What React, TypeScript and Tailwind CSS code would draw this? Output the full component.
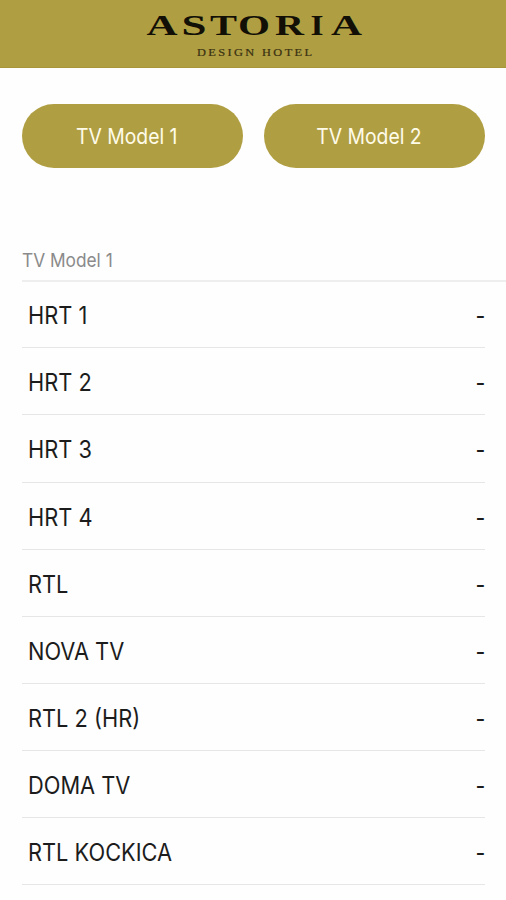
const channels = ['HRT 1', 'HRT 2', 'HRT 3', 'HRT 4', 'RTL', 'NOVA TV', 'RTL 2 (HR)', 'DOMA TV', 'RTL KOCKICA'];

// Wordmark letters: glyph, left edge, drawn width
const wordmark: [string, number, number][] = [
  ['A', 146.5, 31],
  ['S', 181.5, 25],
  ['T', 210, 27],
  ['O', 238, 32],
  ['R', 275, 29],
  ['I', 310.5, 13],
  ['A', 331, 31],
];

function Logo() {
  return (
    <svg width="506" height="67" viewBox="0 0 506 67" className="block" fontFamily="'Liberation Serif', serif">
      <g fontSize="30" fontWeight="700" fill="#120f06">
        {wordmark.map(([ch, x, w], i) => (
          <text key={i} x={x} y="35.3" textLength={w} lengthAdjust="spacingAndGlyphs">{ch}</text>
        ))}
      </g>
      <text transform="translate(197 55.5) scale(1.3 1)" fontSize="9.5" textLength="88.5" lengthAdjust="spacing" fill="#3a3212" stroke="#3a3212" strokeWidth="0.2">DESIGN HOTEL</text>
    </svg>
  );
}

export default function App() {
  return (
    <div className="h-[900px] w-[506px] overflow-hidden bg-[#fefefe] font-['Inter',sans-serif]">
      <header className="h-[68px] border-b border-[#a8953a] bg-[#b09f42]"><Logo /></header>
      <div className="mt-9 flex gap-[21px] pl-[22px] text-[22px] leading-[64px] text-[#fffbe9]">
        <button className="h-16 w-[221px] rounded-full bg-[#b09f42] pr-[11px]"><span className="inline-block scale-x-[0.88]">TV Model 1</span></button>
        <button className="h-16 w-[221px] rounded-full bg-[#b09f42] pr-[11px]"><span className="inline-block scale-x-[0.88]">TV Model 2</span></button>
      </div>
      <h2 className="mt-[72px] ml-[22px] h-[42px] border-b-2 border-[#eeeeee] text-[19px] leading-[41px] text-[#8b8b8b]">
        <span className="inline-block origin-left scale-x-[0.91]">TV Model 1</span>
      </h2>
      <ul className="-mt-[0.7px] ml-[22px] w-[463px] text-[24.5px] leading-[68px] text-[#1c1c1c]">
        {channels.map((name) => (
          <li key={name} className="flex h-[67.08px] justify-between border-b border-[#e6e6e6] pl-[6px]">
            <span className="inline-block origin-left scale-x-[0.89]">{name}</span>
            <span className="inline-block origin-right scale-x-[0.87] pt-px">-</span>
          </li>
        ))}
      </ul>
    </div>
  );
}
